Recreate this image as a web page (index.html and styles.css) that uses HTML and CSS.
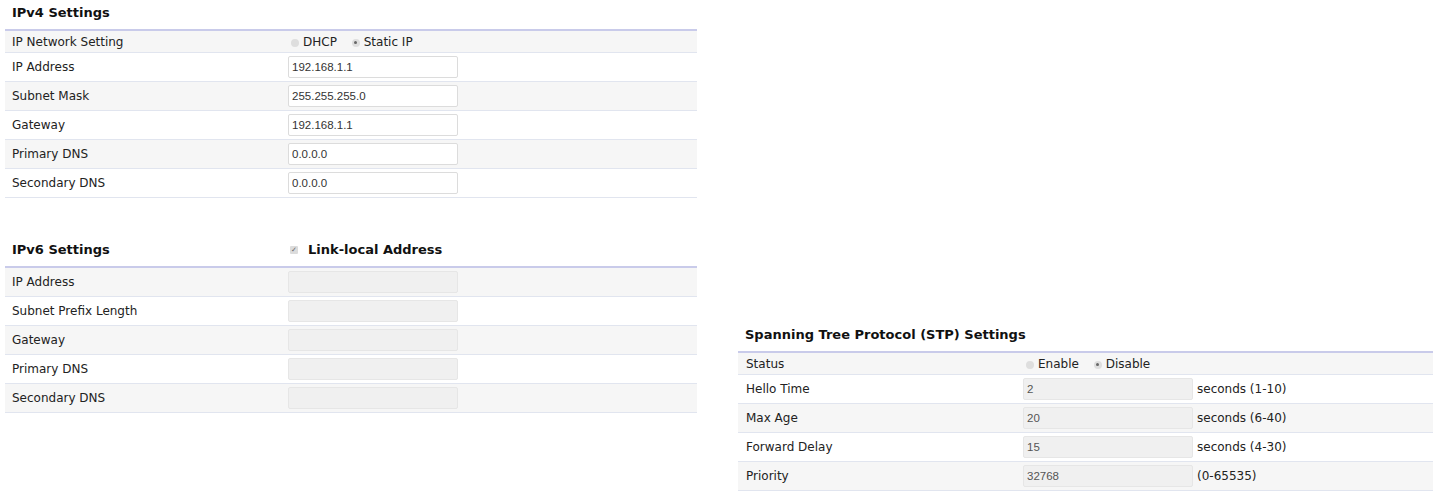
FILE: index.html
```html
<!DOCTYPE html>
<html lang="en">
<head>
  <meta charset="UTF-8">
  <meta name="viewport" content="width=device-width, initial-scale=1.0">
  <title>Network Settings</title>
  <link rel="stylesheet" href="styles.css">
</head>
<body>
  <div class="page">

    <!-- Left column: IPv4 / IPv6 -->
    <div class="panel panel-left">
      <h2 class="section-title">IPv4 Settings</h2>
      <table class="settings">
        <tr class="row-short">
          <td class="label">IP Network Setting</td>
          <td>
            <span class="radio"></span><span class="opt">DHCP</span>
            <span class="radio checked"></span><span class="opt">Static IP</span>
          </td>
        </tr>
        <tr>
          <td class="label">IP Address</td>
          <td><input class="field" type="text" value="192.168.1.1"></td>
        </tr>
        <tr>
          <td class="label">Subnet Mask</td>
          <td><input class="field" type="text" value="255.255.255.0"></td>
        </tr>
        <tr>
          <td class="label">Gateway</td>
          <td><input class="field" type="text" value="192.168.1.1"></td>
        </tr>
        <tr>
          <td class="label">Primary DNS</td>
          <td><input class="field" type="text" value="0.0.0.0"></td>
        </tr>
        <tr>
          <td class="label">Secondary DNS</td>
          <td><input class="field" type="text" value="0.0.0.0"></td>
        </tr>
      </table>

      <div class="section-title section-title-v6">
        <span class="title-text">IPv6 Settings</span>
        <span class="title-check"><span class="checkbox">&#10003;</span>Link-local Address</span>
      </div>
      <table class="settings">
        <tr>
          <td class="label">IP Address</td>
          <td><input class="field" type="text" disabled></td>
        </tr>
        <tr>
          <td class="label">Subnet Prefix Length</td>
          <td><input class="field" type="text" disabled></td>
        </tr>
        <tr>
          <td class="label">Gateway</td>
          <td><input class="field" type="text" disabled></td>
        </tr>
        <tr>
          <td class="label">Primary DNS</td>
          <td><input class="field" type="text" disabled></td>
        </tr>
        <tr>
          <td class="label">Secondary DNS</td>
          <td><input class="field" type="text" disabled></td>
        </tr>
      </table>
    </div>

    <!-- Right column: STP -->
    <div class="panel panel-right">
      <h2 class="section-title">Spanning Tree Protocol (STP) Settings</h2>
      <table class="settings">
        <tr class="row-short">
          <td class="label">Status</td>
          <td colspan="2">
            <span class="radio"></span><span class="opt">Enable</span>
            <span class="radio checked"></span><span class="opt">Disable</span>
          </td>
        </tr>
        <tr>
          <td class="label">Hello Time</td>
          <td class="input-cell"><input class="field" type="text" value="2" disabled></td>
          <td class="unit">seconds (1-10)</td>
        </tr>
        <tr>
          <td class="label">Max Age</td>
          <td class="input-cell"><input class="field" type="text" value="20" disabled></td>
          <td class="unit">seconds (6-40)</td>
        </tr>
        <tr>
          <td class="label">Forward Delay</td>
          <td class="input-cell"><input class="field" type="text" value="15" disabled></td>
          <td class="unit">seconds (4-30)</td>
        </tr>
        <tr>
          <td class="label">Priority</td>
          <td class="input-cell"><input class="field" type="text" value="32768" disabled></td>
          <td class="unit">(0-65535)</td>
        </tr>
      </table>
    </div>

  </div>
</body>
</html>
```

FILE: styles.css
```css
body {
  margin: 0;
  font-family: "DejaVu Sans", Verdana, sans-serif;
  font-size: 12px;
  color: #222;
  background: #fff;
}

.page {
  display: flex;
  align-items: flex-start;
  gap: 41px;
  padding-left: 5px;
}

.panel-left {
  width: 692px;
}

.panel-right {
  width: 695px;
  padding-top: 322px;
}

.section-title {
  margin: 0;
  padding: 4px 7px 7px;
  line-height: 18px;
  font-size: 13px;
  font-weight: bold;
  color: #111;
  border-bottom: 2px solid #c9cbea;
}

.section-title-v6 {
  display: flex;
  margin-top: 39px;
}

.title-text {
  width: 276px;
}

.title-check {
  display: flex;
  align-items: center;
}

.checkbox {
  display: inline-block;
  width: 8px;
  height: 8px;
  margin: 0 10px 0 2px;
  background: #dcdcdc;
  border-radius: 1px;
  color: #666;
  font-size: 7px;
  line-height: 8px;
  text-align: center;
}

.settings {
  width: 100%;
  border-collapse: collapse;
}

.settings td {
  height: 28px;
  padding: 0;
  border-bottom: 1px solid #e1e5ef;
  vertical-align: middle;
}

.settings tr:nth-child(odd) td {
  background: #f6f6f6;
}

.settings .row-short td {
  height: 21px;
}

.settings .label {
  width: 276px;
  padding-left: 7px;
}

.panel-right .settings .label {
  width: 277px;
  padding-left: 8px;
}

.settings .input-cell {
  width: 170px;
}

.settings .unit {
  padding-left: 4px;
}

.field {
  display: block;
  box-sizing: border-box;
  width: 170px;
  height: 22px;
  margin: 0;
  padding: 0 3px;
  border: 1px solid #dcdcdc;
  border-radius: 2px;
  background: #fff;
  font-family: "Liberation Sans", Arial, sans-serif;
  font-size: 11.5px;
  color: #333;
}

.field:disabled {
  background: #f0f0f0;
  border-color: #e6e6e6;
  color: #555;
}

.radio {
  display: inline-block;
  width: 8px;
  height: 8px;
  margin: 0 4px 0 3px;
  border-radius: 50%;
  background: #dedede;
  vertical-align: -1px;
  position: relative;
}

.radio.checked::after {
  content: "";
  position: absolute;
  left: 2.5px;
  top: 2.5px;
  width: 3px;
  height: 3px;
  border-radius: 50%;
  background: #666;
}

.opt {
  margin-right: 8px;
}
```
